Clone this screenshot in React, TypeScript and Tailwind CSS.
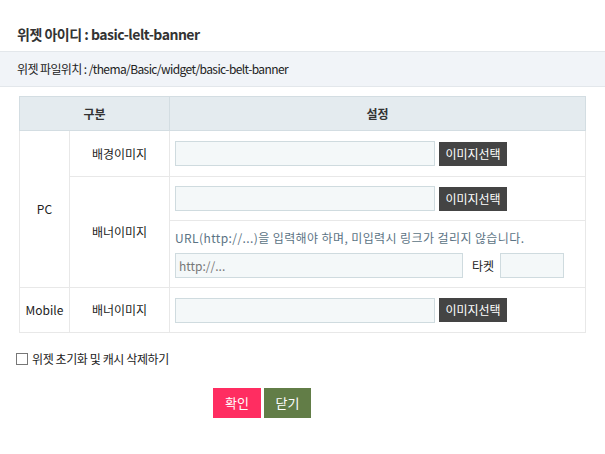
import React from "react";

const font = { fontFamily: '"Noto Sans CJK KR", "Noto Sans", sans-serif' };

function Inp({ w, ph }: { w: string; ph?: string }) {
  return (
    <input
      placeholder={ph}
      className={`${w} h-[25px] border border-[#cfdbdf] bg-[#f4f8f9] px-[3px] text-[12px] text-[#555] outline-none placeholder:text-[#777]`}
    />
  );
}

function Btn() {
  return (
    <button className="ml-[4px] h-[24px] w-[68px] bg-[#444444] text-[12px] text-white">
      이미지선택
    </button>
  );
}

export default function App() {
  return (
    <div className="h-[454px] w-[605px] bg-white text-[12px] text-[#222]" style={font}>
      <div className="px-[17px] pt-[25px] pb-[7px] text-[14px] font-semibold leading-[19px] tracking-[-0.5px] text-[#333]">
        위젯 아이디 : basic-lelt-banner
      </div>
      <div className="flex h-[36px] items-center border-y border-[#e3e7eb] bg-[#f1f4f8] px-[17px] text-[12px] tracking-[-0.6px] text-[#222]">
        위젯 파일위치 : /thema/Basic/widget/basic-belt-banner
      </div>
      <div className="px-[19px] pt-[9px]">
        <table className="w-[567px] table-fixed border-collapse">
          <colgroup>
            <col className="w-[50px]" />
            <col className="w-[100px]" />
            <col />
          </colgroup>
          <thead>
            <tr className="h-[34px] bg-[#e4ebef] text-[12px] font-bold text-[#333]">
              <th colSpan={2} className="border border-[#d3dde2]">구분</th>
              <th className="border border-[#d3dde2]">설정</th>
            </tr>
          </thead>
          <tbody>
            <tr className="h-[46px]">
              <td rowSpan={3} className="border border-[#e8e8e8] text-center">PC</td>
              <td className="border border-[#e8e8e8] text-center">배경이미지</td>
              <td className="border border-[#e8e8e8] pl-[5px]">
                <div className="flex items-center">
                  <Inp w="w-[260px]" />
                  <Btn />
                </div>
              </td>
            </tr>
            <tr className="h-[44px]">
              <td rowSpan={2} className="border border-[#e8e8e8] text-center">배너이미지</td>
              <td className="border border-[#e8e8e8] pl-[5px]">
                <div className="flex items-center">
                  <Inp w="w-[260px]" />
                  <Btn />
                </div>
              </td>
            </tr>
            <tr className="h-[67px]">
              <td className="border border-[#e8e8e8] pl-[5px]">
                <div className="mb-[7px] text-[12px] leading-[16px] tracking-[0.4px] text-[#5b7384]">
                  URL(http://...)을 입력해야 하며, 미입력시 링크가 걸리지 않습니다.
                </div>
                <div className="flex items-center">
                  <Inp w="w-[288px]" ph="http://..." />
                  <span className="ml-[9px] mr-[6px] text-[12px] text-[#222]">타켓</span>
                  <Inp w="w-[64px]" />
                </div>
              </td>
            </tr>
            <tr className="h-[45px]">
              <td className="border border-[#e8e8e8] text-center">Mobile</td>
              <td className="border border-[#e8e8e8] text-center">배너이미지</td>
              <td className="border border-[#e8e8e8] pl-[5px]">
                <div className="flex items-center">
                  <Inp w="w-[260px]" />
                  <Btn />
                </div>
              </td>
            </tr>
          </tbody>
        </table>
      </div>
      <label className="mt-[17px] ml-[16px] flex items-center text-[12px] tracking-[-0.4px] text-[#222]">
        <span className="mr-[4px] inline-block h-[12px] w-[12px] border border-[#777] bg-white" />
        위젯 초기화 및 캐시 삭제하기
      </label>
      <div className="mt-[20px] flex pl-[213px]">
        <button className="h-[30px] w-[48px] bg-[#ff2d61] text-[13px] text-white">확인</button>
        <button className="ml-[3px] h-[30px] w-[47px] bg-[#627d47] text-[13px] text-white">닫기</button>
      </div>
    </div>
  );
}
